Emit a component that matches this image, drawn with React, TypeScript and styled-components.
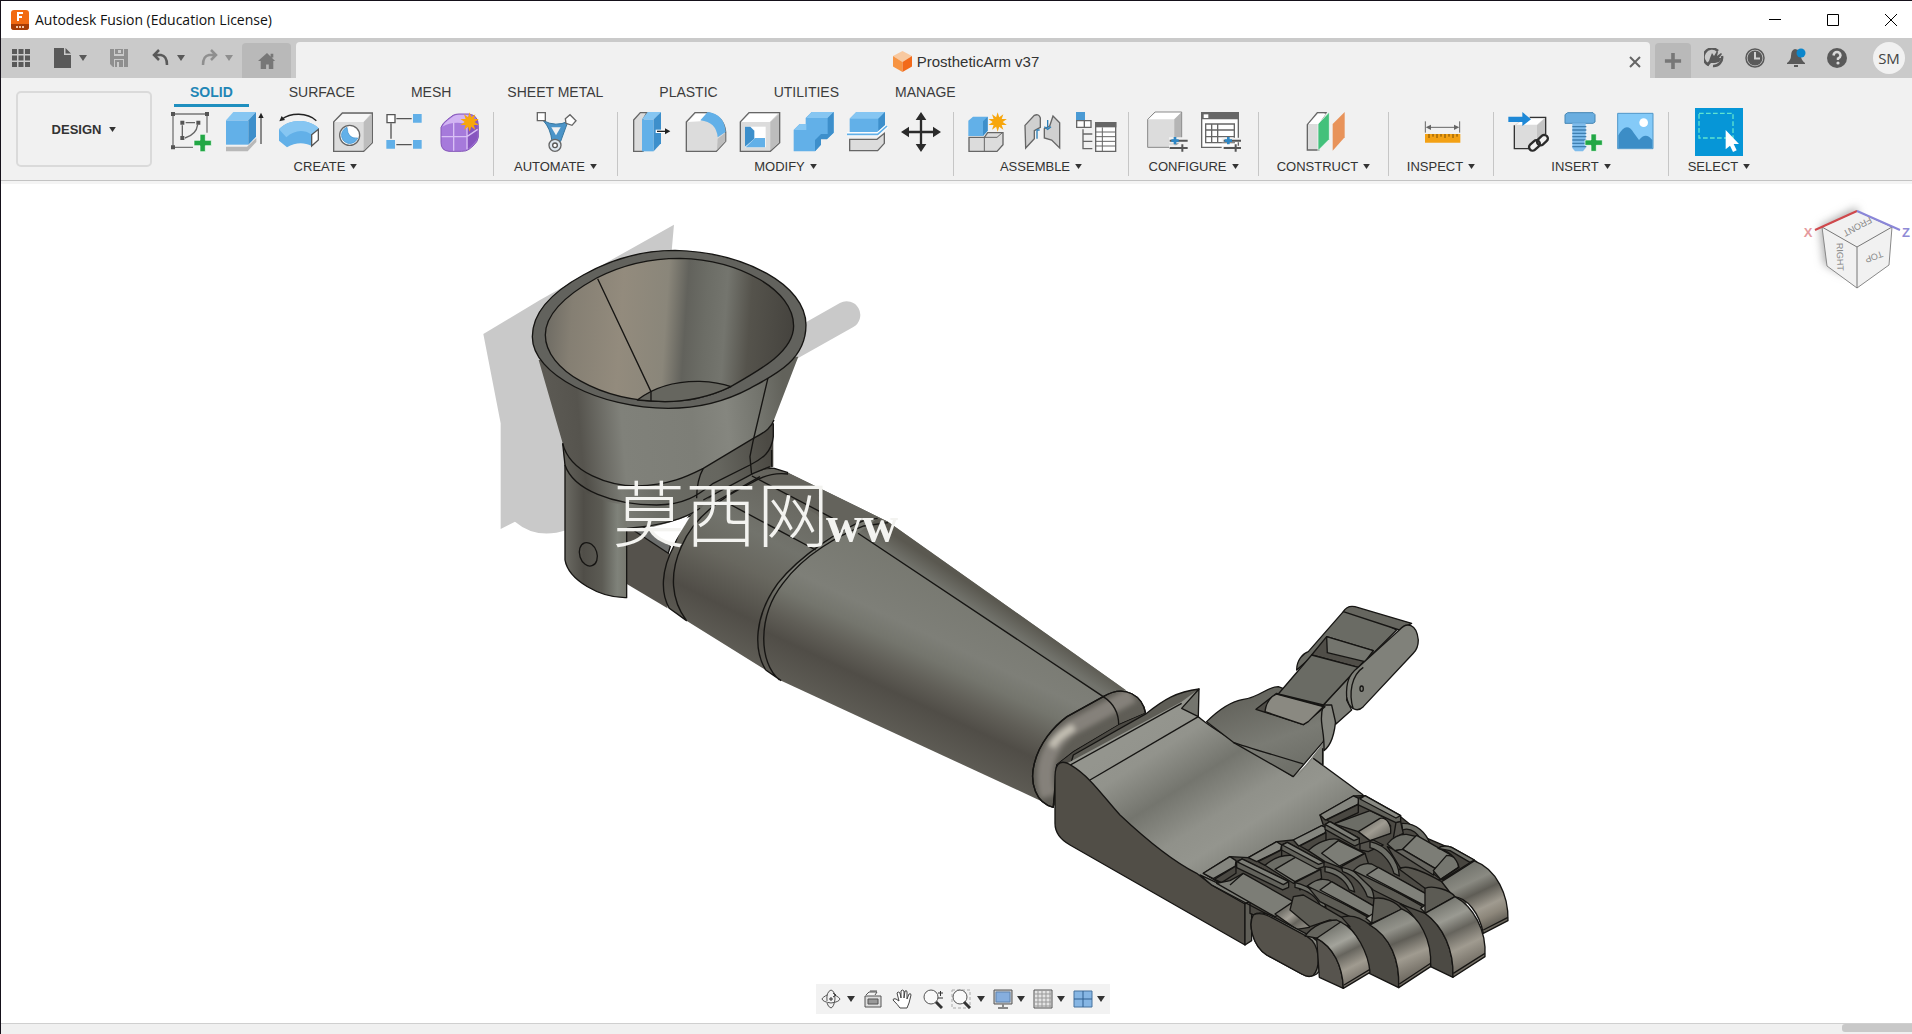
import React from "react";
import styled, { createGlobalStyle } from "styled-components";

const Global = createGlobalStyle`
  * { box-sizing: border-box; }
  body { margin: 0; background: #fff; font-family: "Liberation Sans", Arial, sans-serif; color: #333; }
  button { font: inherit; color: inherit; background: none; border: 0; padding: 0; margin: 0; cursor: pointer; }
  svg { display: block; }
`;

const Frame = styled.div`
  min-height: 100vh;
  display: flex;
  flex-direction: column;
  border-top: 1px solid #15111a;
  border-left: 1px solid #15111a;
`;

/* ---------- title bar ---------- */
const TitleBar = styled.header`
  display: flex;
  align-items: center;
  height: 37px;
  padding-left: 10px;
  gap: 6px;
  background: #fff;
`;
const Title = styled.h1`
  flex: 1;
  margin: 0;
  font: 400 14px/20px "Open Sans", "Noto Sans", sans-serif;
  color: #111;
`;
const WindowButtons = styled.div`
  display: flex;
`;
const WindowButton = styled.button`
  display: grid;
  place-items: center;
  width: 58px;
  height: 36px;
  &:last-child { width: 50px; padding-left: 8px; }
`;

/* ---------- document tab bar ---------- */
const TabBar = styled.div`
  display: flex;
  align-items: flex-end;
  height: 40px;
  background: #cacaca;
`;
const QuickTools = styled.div`
  display: flex;
  align-items: center;
  align-self: stretch;
  width: 241px;
  padding-left: 10px;
`;
const QuickButton = styled.button<{ $w: number; $dim?: boolean }>`
  display: flex;
  align-items: center;
  gap: 6px;
  width: ${(p) => p.$w}px;
  color: ${(p) => (p.$dim ? "#8f8f8f" : "#595959")};
`;
const SideTab = styled.button<{ $w: number }>`
  display: grid;
  place-items: center;
  width: ${(p) => p.$w}px;
  height: 35px;
  border-radius: 4px 4px 0 0;
  background: #b9b9b9;
  color: #777;
`;
const DocumentTab = styled.div`
  flex: 1;
  display: flex;
  align-items: center;
  height: 36px;
  margin: 0 5px;
  padding: 3px 6px 0 0;
  border-radius: 4px 4px 0 0;
  background: #f1f1f1;
`;
const DocumentName = styled.div`
  flex: 1;
  display: flex;
  align-items: center;
  justify-content: center;
  gap: 5px;
  padding-left: 8px;
  font-size: 15px;
  line-height: 20px;
`;
const CloseTab = styled.button`
  width: 16px;
  height: 16px;
  color: #666;
`;
const AccountTools = styled.div`
  display: flex;
  align-items: center;
  align-self: stretch;
  gap: 21px;
  padding: 0 7px 0 13px;
  color: #595959;
`;
const Avatar = styled.button`
  width: 32px;
  height: 32px;
  margin-left: 5px;
  border-radius: 50%;
  background: #f1f1f1;
  color: #444;
  font: 400 15px/32px "Open Sans", sans-serif;
`;

/* ---------- ribbon ---------- */
const Ribbon = styled.nav`
  display: flex;
  gap: 6px;
  height: 106px;
  padding-left: 15px;
  background: linear-gradient(#f1f1f1 102px, #c3c3c3 102px, #c3c3c3 103px, #f4f4f4 103px);
`;
const Workspace = styled.button`
  display: flex;
  align-items: center;
  justify-content: center;
  gap: 8px;
  width: 136px;
  height: 76px;
  margin-top: 13px;
  border: 2px solid #dadada;
  border-radius: 5px;
  font-size: 13px;
  font-weight: 700;
`;
const RibbonBody = styled.div`
  flex: 1;
`;
const RibbonTabs = styled.div`
  display: flex;
  gap: 24px;
  padding-left: 16px;
`;
const RibbonTab = styled.button<{ $on?: boolean }>`
  height: 29px;
  padding: 1px 16px 0;
  border-bottom: 3px solid ${(p) => (p.$on ? "#1f8fbf" : "transparent")};
  color: ${(p) => (p.$on ? "#1f86b6" : "#3c3c3c")};
  font-size: 14px;
  font-weight: ${(p) => (p.$on ? 700 : 400)};
  white-space: nowrap;
`;
const Groups = styled.div`
  display: flex;
  padding-top: 5px;
`;
const Group = styled.section<{ $w: number }>`
  display: flex;
  flex-direction: column;
  align-items: center;
  gap: 6px;
  width: ${(p) => p.$w}px;
  height: 64px;
  border-right: 1px solid #c6c6c6;
  &:last-child { border-right: 0; }
`;
const Tools = styled.div`
  display: flex;
  gap: 14px;
`;
const Tool = styled.button<{ $on?: boolean }>`
  width: 40px;
  height: 40px;
  background: ${(p) => (p.$on ? "#0696d7" : "none")};
  box-shadow: ${(p) => (p.$on ? "0 0 0 4px #0696d7" : "none")};
`;
const GroupMenu = styled.button`
  display: flex;
  align-items: center;
  gap: 5px;
  height: 17px;
  font-size: 13px;
  line-height: 16px;
  color: #333;
`;

/* ---------- viewport ---------- */
const Viewport = styled.main`
  position: relative;
  flex: 1;
  display: flex;
  background: #fff;
`;
const Scene = styled.svg`
  flex: 1;
  min-width: 0;
  width: 100%;
`;
const ViewCube = styled.svg`
  position: absolute;
  top: 14px;
  right: 0;
`;
const NavBar = styled.div`
  position: absolute;
  left: 12px;
  right: 0;
  bottom: 9px;
  display: flex;
  justify-content: center;
`;
const NavTools = styled.div`
  display: flex;
  align-items: center;
  gap: 8px;
  height: 30px;
  padding: 0 5px;
  background: #f2f2f2;
`;
const NavButton = styled.button<{ $gap?: number }>`
  display: flex;
  align-items: center;
  gap: ${(p) => p.$gap ?? 4}px;
  color: #333;
`;
const StatusBar = styled.footer`
  display: flex;
  justify-content: flex-end;
  height: 11px;
  border-top: 1px solid #cfcfcf;
  background: #f0f0f0;
`;
const ScrollThumb = styled.div`
  width: 70px;
  height: 8px;
  border-radius: 3px 0 0 3px;
  background: #c8c8c8;
`;

const Caret = ({ size = 8 }: { size?: number }) => (
  <svg width={size} height={size - 2} viewBox="0 0 8 6" aria-hidden="true">
    <path d="M0 0h8L4 6z" fill="currentColor" />
  </svg>
);

const Plus = ({ x, y }: { x: number; y: number }) => (
  <path d={`M${x - 8} ${y - 26}h16v18h18v16h-18v18h-16v-18h-18v-16h18z`} fill="#22a745" stroke="#fff" strokeWidth="2" />
);
const Star = ({ x, y }: { x: number; y: number }) => {
  const pts = Array.from({ length: 20 }, (_, i) => {
    const r = i % 2 ? 15 : 29;
    const a = (i * Math.PI) / 10 - Math.PI / 2;
    return `${x + r * Math.cos(a)},${y + r * Math.sin(a)}`;
  }).join(" ");
  return <polygon points={pts} fill="#f7a60c" />;
};

const BLUE = "#62b0e8";
const DEEP = "#3d8fcb";
const EDGE = "#666";
const PALE = "#dcdcdc";

const icons: Record<string, React.ReactNode> = {
  sketch: (
    <>
      <path d="M6 6H108V62M6 6V106H66" fill="none" stroke="#777" strokeWidth="4" />
      <path d="M34 40V72M44 32H72M80 38Q76 68 42 78" fill="none" stroke="#666" strokeWidth="4" />
      <path d="M0 0h12v12H0zM102 0h12v12h-12zM0 100h12v12H0zM28 26h12v12H28zM76 26h12v12H76zM28 72h12v12H28z" fill="#555" />
      <Plus x={95} y={93} />
    </>
  ),
  extrude: (
    <>
      <path d="M3 104H66L94 78V90L68 118H3z" fill="#b8b8b8" />
      <path d="M3 25H70V98H3z" fill={BLUE} />
      <path d="M3 25L25 0H93L70 25z" fill="#86c6f2" />
      <path d="M70 25L93 0V74L70 98z" fill={DEEP} />
      <path d="M108 96V14" stroke="#222" strokeWidth="3" />
      <path d="M100 18L108 2L116 18z" fill="#222" />
    </>
  ),
  revolve: (
    <>
      <path d="M8 22C34 2 84 0 112 26" fill="none" stroke="#222" strokeWidth="4" />
      <path d="M1 28L8 12L18 24z" fill="#222" />
      <path d="M0 52C28 20 90 18 120 50L98 102C74 90 48 92 24 106L0 86z" fill={BLUE} />
      <path d="M0 52C28 20 90 18 120 50L98 68C72 50 44 56 22 76z" fill="#86c6f2" />
      <path d="M98 68L118 52V84L98 102z" fill="#fff" stroke="#555" strokeWidth="4" />
    </>
  ),
  hole: (
    <>
      <path d="M2 30L28 3H118V92L92 118H2z" fill={PALE} stroke={EDGE} strokeWidth="4" />
      <path d="M5 30L30 6H112L92 30z" fill="#f6f6f6" />
      <path d="M92 30L116 6V92L92 116z" fill="#bdbdbd" />
      <circle cx="50" cy="70" r="30" fill="#fff" stroke={EDGE} strokeWidth="4" />
      <path d="M42 46A25 25 0 1 0 74 78Q44 82 42 46z" fill={BLUE} stroke={DEEP} strokeWidth="2" />
    </>
  ),
  pattern: (
    <>
      <path d="M28 20H74M12 34V80M28 98H74" stroke="#555" strokeWidth="4" />
      <path d="M0 8h24v24H0z" fill="#fff" stroke="#555" strokeWidth="4" />
      <path d="M78 6h26v26H78zM-2 84h26v26H-2zM78 84h26v26H78z" fill={BLUE} />
    </>
  ),
  form: (
    <>
      <path d="M0 46Q4 34 20 22L36 10Q44 6 54 6H84Q112 10 112 40V76Q110 90 96 102L84 112Q76 118 62 118H24Q0 116 0 92z" fill="#a67adb" stroke="#8456b8" strokeWidth="3" />
      <path d="M4 44Q8 34 22 24L38 12Q46 8 54 8H84L70 34Q30 28 4 44z" fill="#d2b4f3" />
      <path d="M78 38L110 24V76Q108 88 80 112z" fill="#8755bf" />
      <path d="M38 32V116M2 74H78L110 52M78 38V112" fill="none" stroke="#d9c0f5" strokeWidth="4" />
      <Star x={86} y={30} />
    </>
  ),
  automate: (
    <>
      <path d="M22 26Q60 46 96 28L74 88H48Q44 50 22 26z" fill="#4b94c8" stroke="#39779f" strokeWidth="3" />
      <path d="M46 46H74L60 70z" fill="#f1f1f1" />
      <path d="M4 2H28V26H4zM88 20L102 8L120 26L108 40L90 34z" fill="#fff" stroke={EDGE} strokeWidth="4" />
      <circle cx="57" cy="100" r="18" fill="#dce6ee" stroke={EDGE} strokeWidth="4" />
      <circle cx="57" cy="100" r="7" fill="#fff" stroke="#555" strokeWidth="4" />
    </>
  ),
  press: (
    <>
      <path d="M8 24L28 2H48L36 22V118H8z" fill={PALE} stroke={EDGE} strokeWidth="4" />
      <path d="M33 22H68V118H33z" fill={BLUE} />
      <path d="M33 22L50 0H90L68 22z" fill="#86c6f2" />
      <path d="M68 22L90 0V94L68 118z" fill={DEEP} />
      <path d="M74 58H104" stroke="#fff" strokeWidth="10" />
      <path d="M78 58H106" stroke="#222" strokeWidth="4" />
      <path d="M102 49L118 58L102 67z" fill="#222" />
    </>
  ),
  fillet: (
    <>
      <path d="M4 30L30 2H66Q118 12 122 60V88L94 118H4z" fill={PALE} stroke={EDGE} strokeWidth="4" />
      <path d="M8 30L32 5H66L46 28z" fill="#fff" />
      <path d="M46 25L68 0Q118 6 122 60L98 76Q94 30 46 25z" fill={BLUE} />
      <path d="M98 80L121 62V88L96 114z" fill="#bdbdbd" />
    </>
  ),
  shell: (
    <>
      <path d="M4 30L30 2H122V92L94 118H4z" fill={PALE} stroke={EDGE} strokeWidth="4" />
      <path d="M7 30L32 5H116L92 30z" fill="#fff" />
      <path d="M94 30L120 6V92L94 115z" fill="#bdbdbd" />
      <path d="M18 44H80V106H18z" fill="#fff" />
      <path d="M18 44H34L46 56V80L18 104z" fill={DEEP} />
      <path d="M20 106L48 78H78V106z" fill={BLUE} />
    </>
  ),
  combine: (
    <>
      <path d="M2 54L20 36H38V18L56 0H122V62L102 80H84V98L66 118H2z" fill={BLUE} />
      <path d="M40 18L56 0H122L104 18zM2 54L20 36H40V54z" fill="#86c6f2" />
      <path d="M104 18L122 0V62L102 82H84V98L66 118V84L84 66H104z" fill={DEEP} />
    </>
  ),
  split: (
    <>
      <path d="M8 82V116H92L112 94V64L90 82z" fill={PALE} stroke={EDGE} strokeWidth="4" />
      <path d="M8 20L28 0H114V42L94 60H8z" fill={BLUE} />
      <path d="M8 20L28 0H114L94 20z" fill="#86c6f2" />
      <path d="M94 20L114 0V42L94 60z" fill={DEEP} />
      <path d="M0 67H92L120 42" fill="none" stroke="#fff" strokeWidth="12" />
      <path d="M0 67H92L120 42" fill="none" stroke={BLUE} strokeWidth="5" />
    </>
  ),
  move: (
    <>
      <path d="M60 18V102M18 60H102" stroke="#2b2b2b" strokeWidth="7" />
      <path d="M60 0L76 24H44zM60 120L44 96H76zM0 60L24 44V76zM120 60L96 76V44z" fill="#2b2b2b" />
    </>
  ),
  component: (
    <>
      <path d="M6 76V118H90L108 98V62H62L52 76z" fill={PALE} stroke={EDGE} strokeWidth="4" />
      <path d="M52 76V118M54 76H90M90 76L106 62" fill="none" stroke={EDGE} strokeWidth="3" />
      <path d="M4 26L18 14H62V56L48 72H4z" fill={BLUE} />
      <path d="M48 28L62 14V56L48 72z" fill={DEEP} />
      <Star x={92} y={30} />
    </>
  ),
  joint: (
    <>
      <path d="M12 40L40 10Q54 4 58 18V46L40 56V80L14 108z" fill="#d0d0d0" stroke={EDGE} strokeWidth="4" />
      <path d="M96 12L116 32V108L92 84L70 78V50L86 42z" fill="#d0d0d0" stroke={EDGE} strokeWidth="4" />
      <path d="M48 80V54H56M80 24V48M70 44L80 52L90 44" fill="none" stroke="#2c7fb8" strokeWidth="4" />
    </>
  ),
  asbuilt: (
    <>
      <path d="M3 0H30V26H3z" fill="#4a9ad4" />
      <path d="M5 26H28V46H5zM28 26H48V46H28z" fill="#fff" stroke={EDGE} strokeWidth="4" />
      <path d="M24 52V110H52M24 66H52M24 88H52" fill="none" stroke={EDGE} strokeWidth="4" />
      <path d="M62 32H122V118H62z" fill="#fff" stroke={EDGE} strokeWidth="4" />
      <path d="M60 30H124V46H60z" fill="#666" />
      <path d="M62 60H122M62 74H122M62 88H122M62 102H122M82 46V118" stroke={EDGE} strokeWidth="3" />
    </>
  ),
  configure: (
    <>
      <path d="M2 22L24 0H104V84L80 106H2z" fill={PALE} stroke="#888" strokeWidth="3" />
      <path d="M4 22L25 2H102L82 22z" fill="#fff" />
      <path d="M82 22L102 2V84L82 104z" fill="#b5b5b5" />
      <path d="M66 84H124M66 108H124" stroke="#f1f1f1" strokeWidth="16" />
      <path d="M68 86H122M68 108H122M106 97V119" stroke="#555" strokeWidth="6" />
      <path d="M84 75V97M73 86H95" stroke="#2d86c4" strokeWidth="8" />
    </>
  ),
  cfgtable: (
    <>
      <path d="M2 2H112V106H2z" fill="#fff" stroke={EDGE} strokeWidth="4" />
      <path d="M0 0H114V22H0z" fill="#666" />
      <path d="M8 7H22V18H8z" fill="#fff" />
      <path d="M14 36H100V92H14zM14 54H100M14 74H100M32 36V92M50 36V92" fill="none" stroke="#666" strokeWidth="4" />
      <path d="M62 84H124M62 108H124" stroke="#f1f1f1" strokeWidth="14" />
      <path d="M68 86H120M68 108H120M104 97V119" stroke="#555" strokeWidth="6" />
      <path d="M82 75V97M71 86H93" stroke="#2d86c4" strokeWidth="8" />
    </>
  ),
  plane: (
    <>
      <path d="M10 38L40 2H66L44 38V114H10z" fill={PALE} stroke={EDGE} strokeWidth="4" />
      <path d="M14 36L42 5H66L44 36z" fill="#fff" />
      <path d="M42 36L76 0V82L42 116z" fill="#43c17b" stroke="#fff" strokeWidth="2" />
      <path d="M86 36L122 0V76L86 116z" fill="#e8935a" />
    </>
  ),
  measure: (
    <>
      <path d="M13 28V62M116 28V62M22 46H108" stroke="#666" strokeWidth="3" />
      <path d="M14 46L30 38V54zM115 46L99 54V38z" fill="#666" />
      <path d="M12 66H118V92H12z" fill="#f3a114" />
      <path d="M24 66v12M36 66v8M48 66v12M60 66v8M72 66v12M84 66v8M96 66v12M108 66v8" stroke="#7b4d00" strokeWidth="3" />
    </>
  ),
  derive: (
    <>
      <path d="M24 38L50 18H114L90 40V108H24z" fill={PALE} />
      <path d="M28 38L52 20H110L90 38z" fill="#fff" />
      <path d="M90 40L114 18V84L90 108z" fill="#c4c4c4" />
      <path d="M22 40V110H66M68 16H116V66" fill="none" stroke="#333" strokeWidth="4" />
      <path d="M4 14H46V0L72 22L46 42V30H4z" fill="#1e88d6" />
      <path d="M72 108L114 76" stroke="#f1f1f1" strokeWidth="20" />
      <g fill="none" strokeWidth="7" stroke="#2b2b2b">
        <rect x="64" y="90" width="36" height="21" rx="10" transform="rotate(-42 82 100)" />
        <rect x="88" y="74" width="36" height="21" rx="10" transform="rotate(-42 106 84)" />
      </g>
    </>
  ),
  bolt: (
    <>
      <path d="M12 8L20 2H96L102 8V30L96 34H12z" fill="#6aaee0" stroke="#4586b5" strokeWidth="3" />
      <path d="M34 34H74V108L66 118H42L34 108z" fill="#7ebcec" />
      <path d="M34 44H76M34 54H76M34 64H76M34 74H76M34 84H76M34 94H76M34 104H76" stroke="#3f7fb0" strokeWidth="4" />
      <Plus x={98} y={92} />
    </>
  ),
  image: (
    <>
      <path d="M8 4H114V110H8z" fill="#84caf8" stroke="#5197c8" strokeWidth="3" />
      <circle cx="86" cy="32" r="13" fill="#fff" />
      <path d="M10 70Q34 26 56 62L72 84Q92 58 112 84V108H10z" fill="#3c8dc6" />
    </>
  ),
  select: (
    <>
      <path d="M0 4H102V78H0z" fill="none" stroke="#5fe3d0" strokeWidth="4" strokeDasharray="14 7" />
      <path d="M80 54V112L93 101L102 120L113 115L104 96H120z" fill="#fff" />
    </>
  ),
};

const groups: { name: string; w: number; tools: string[] }[] = [
  { name: "CREATE", w: 336, tools: ["sketch", "extrude", "revolve", "hole", "pattern", "form"] },
  { name: "AUTOMATE", w: 124, tools: ["automate"] },
  { name: "MODIFY", w: 336, tools: ["press", "fillet", "shell", "combine", "split", "move"] },
  { name: "ASSEMBLE", w: 175, tools: ["component", "joint", "asbuilt"] },
  { name: "CONFIGURE", w: 130, tools: ["configure", "cfgtable"] },
  { name: "CONSTRUCT", w: 130, tools: ["plane"] },
  { name: "INSPECT", w: 105, tools: ["measure"] },
  { name: "INSERT", w: 175, tools: ["derive", "bolt", "image"] },
  { name: "SELECT", w: 100, tools: ["select"] },
];

const ribbonTabs = ["SOLID", "SURFACE", "MESH", "SHEET METAL", "PLASTIC", "UTILITIES", "MANAGE"];

/* ---------- prosthetic arm ---------- */
type Stop = [number, string];
const Grad = ({ id, c, stops }: { id: string; c: [number, number, number, number]; stops: Stop[] }) => (
  <linearGradient id={id} gradientUnits="userSpaceOnUse" x1={c[0]} y1={c[1]} x2={c[2]} y2={c[3]}>
    {stops.map(([o, color]) => (
      <stop key={o} offset={o} stopColor={color} />
    ))}
  </linearGradient>
);

type Part = [string, string];
const Parts = ({ list }: { list: Part[] }) => (
  <>
    {list.map(([fill, d], i) => (
      <path key={i} d={d} fill={fill} />
    ))}
  </>
);

const WRIST = "M1200 1072C1150 1060 1130 1000 1145 940C1160 880 1200 830 1240 800L1345 740C1410 700 1460 740 1468 790L1390 825L1260 905L1210 945Z";

const knuckles: Part[] = [
  ["#4c4a44", "M520 850L600 800L655 803L740 755L790 750L880 705L870 675L970 618L1000 617L1112 680L1192 745L1250 770L1340 815L1300 960L1100 1000L840 1050L660 970L660 935Z"],
  ["#85867f", "M870 675L970 618L988 626L985 642L886 690Z"],
  ["#85867f", "M790 750L875 707L888 713L886 728L806 768Z"],
  ["#85867f", "M655 803L740 755L755 765L752 780L680 815Z"],
  ["#85867f", "M520 850L600 800L618 812L616 828L550 866Z"],
  ["#4a4842", "M890 690L985 643V668L912 702Z"],
  ["#4a4842", "M810 768L888 728V752L835 782Z"],
  ["#4a4842", "M684 815L755 780V800L705 826Z"],
  ["#4a4842", "M554 868L618 828V850L575 878Z"],
  ["#6c6d66", "M912 702L1020 662L1062 682L1082 708L1080 730L1020 750L985 725Z"],
  ["url(#roller)", "M985 725L1050 685C1070 680 1085 705 1082 730L1020 752Z"],
  ["#6c6d66", "M835 782C860 758 900 742 925 748L1005 790L930 832L885 815Z"],
  ["#7c7d76", "M875 790L925 752L1003 790L928 828Z"],
  ["#6c6d66", "M705 826C735 800 770 792 800 798L872 838L790 880Z"],
  ["#7c7d76", "M735 838L800 800L870 838L795 875Z"],
  ["#55534d", "M930 832L1005 790L1015 820L960 850Z"],
  ["#55534d", "M795 878L872 838L875 865L810 900Z"],
  ["#62625b", "M985 625L1005 617L1112 677V695L1098 698L985 645Z"],
  ["#898a83", "M1005 617L1112 677L1098 684L990 627Z"],
  ["#62625b", "M885 705L900 695L988 745V762L975 768L885 718Z"],
  ["#7c7d76", "M900 695L988 745L972 752L885 703Z"],
  ["#62625b", "M755 765L772 757L882 817V830L862 837L755 780Z"],
  ["#7c7d76", "M772 757L882 817L866 823L757 765Z"],
  ["#62625b", "M620 815L636 807L776 875V892L758 900L620 833Z"],
  ["#7c7d76", "M636 807L776 875L760 884L622 816Z"],
  ["#55534d", "M1098 698L1112 695L1120 730L1090 745Z"],
  ["#55534d", "M990 762V780L1015 785L1060 765L1030 750Z"],
];

const fingers: Part[] = [
  /* fins between the fingers */
  ["#6d6e67", "M395 130C440 128 470 160 480 192L462 200C450 160 420 140 398 150Z"],
  ["#6d6e67", "M300 185C350 195 385 240 388 288L372 280C360 240 330 210 300 203Z"],
  ["#6d6e67", "M215 262C270 272 310 315 312 355L292 350C280 315 250 285 218 275Z"],
  ["#6d6e67", "M165 260C210 265 248 300 254 336L238 330C225 300 200 282 165 275Z"],
  ["#6d6e67", "M75 308C120 318 160 350 168 382L152 378C140 350 110 330 75 322Z"],
  /* index finger */
  ["#55534d", "M352 200L375 210L495 285L512 298L480 300L390 262Z"],
  ["#6c6d66", "M352 192C365 172 390 162 410 163L440 170L398 208L375 212Z"],
  ["#7c7d76", "M398 208L440 166L545 226L495 265Z"],
  ["#66655f", "M375 212L398 208L495 265L490 285Z"],
  ["url(#tipA)", "M490 272L530 226C555 226 568 245 565 262L512 298Z"],
  ["#484640", "M505 205C515 195 535 198 545 202L613 240L520 298L512 298L567 262C560 230 530 210 505 205Z"],
  ["#73746d", "M505 205C515 195 535 198 545 202L613 240L600 247L540 212Z"],
  ["#57554e", "M388 268C400 255 440 262 515 305L550 350L465 325Z"],
  ["url(#tipA)", "M515 305L613 243C680 268 716 345 714 422L640 460C628 400 592 352 550 350Z"],
  /* middle finger */
  ["#5c5b54", "M250 272L300 290L455 378L465 398L440 395L310 330Z"],
  ["#70716a", "M250 272C265 255 285 248 305 252L505 362L470 380Z"],
  ["#80817a", "M290 285L325 262L505 362L470 380Z"],
  ["#9a9a92", "M452 385L492 356L510 368L505 380L465 398Z"],
  ["#4c4a44", "M390 372L465 400C520 440 552 510 549 592L482 560C480 480 440 400 390 372Z"],
  ["#5c5b54", "M465 325C490 315 540 330 555 350L465 400Z"],
  ["url(#tipB)", "M465 400L555 350C610 380 650 450 645 530L549 592C552 510 520 440 465 400Z"],
  /* ring finger */
  ["#5c5b54", "M115 322L150 330L300 415L305 432L270 425L150 365Z"],
  ["#70716a", "M112 318C135 300 150 295 175 300L340 395L305 412Z"],
  ["#7c7d76", "M150 330L185 305L340 395L305 412Z"],
  ["#9a9a92", "M288 415L325 390L345 402L340 410L305 430Z"],
  ["#5c5b54", "M312 355C340 350 380 365 395 388L305 430Z"],
  ["#4c4a44", "M205 415C240 400 270 410 300 435C360 470 390 540 386 623L298 580C285 500 250 440 205 415Z"],
  ["url(#tipC)", "M300 435L395 387C450 410 486 480 482 560L386 623C390 540 360 470 300 435Z"],
  /* little finger */
  ["#5c5b54", "M70 350L100 345L215 412L240 440L180 420L120 440L60 390Z"],
  ["#65655e", "M105 468C130 435 170 420 200 420L215 428L145 475Z"],
  ["#57544e", "M140 475C190 500 218 560 220 625L148 592Z"],
  ["url(#tipD)", "M140 475L212 426C260 450 295 520 300 577L220 625C218 560 190 500 140 475Z"],
];

const ArmModel = () => (
  <Scene viewBox="1 184 1911 839" role="img" aria-label="Prosthetic arm model">
    <defs>
      <Grad id="inner" c={[230, 330, 970, 380]} stops={[[0, "#6f6c64"], [0.1, "#857f73"], [0.3, "#938b7d"], [0.48, "#8a867a"], [0.56, "#62625c"], [0.64, "#6c6d66"], [0.72, "#74756e"], [0.82, "#55534c"], [1, "#45433e"]]} />
      <Grad id="cone" c={[240, 600, 940, 540]} stops={[[0, "#5b5953"], [0.12, "#56544e"], [0.3, "#80817a"], [0.6, "#7d7e77"], [0.75, "#85867f"], [0.9, "#72736c"], [1, "#62625b"]]} />
      <Grad id="cuff" c={[285, 900, 910, 800]} stops={[[0, "#66655e"], [0.12, "#504e48"], [0.28, "#7a7b74"], [0.45, "#6b6c65"], [0.75, "#66665f"], [1, "#4c4a44"]]} />
      <Grad id="post" c={[285, 1000, 470, 1000]} stops={[[0, "#6b6a63"], [0.3, "#504e48"], [0.6, "#5c5b54"], [0.85, "#7f827a"], [1, "#77786f"]]} />
      <Grad id="forearm" c={[780, 294, 552, 764]} stops={[[0, "#76776f"], [0.4, "#7e7f78"], [0.52, "#74756d"], [0.66, "#605e57"], [0.78, "#504d47"], [1, "#5e5c55"]]} />
      <Grad id="upper" c={[430, 90, 190, 560]} stops={[[0, "#66655e"], [0.35, "#72736c"], [0.55, "#68675f"], [0.8, "#504d47"], [1, "#5e5c55"]]} />
      <Grad id="strip" c={[1060, 470, 1030, 515]} stops={[[0, "#5a5850"], [1, "#72736c"]]} />
      <Grad id="palm" c={[330, 430, 600, 860]} stops={[[0, "#94958e"], [0.15, "#92938c"], [0.4, "#74756e"], [0.65, "#90918a"], [0.8, "#94958e"], [1, "#80817a"]]} />
      <Grad id="roller" c={[1000, 690, 1050, 760]} stops={[[0, "#6b6a63"], [0.5, "#a09c92"], [1, "#66645d"]]} />
      <Grad id="rollerLow" c={[765, 950, 815, 1015]} stops={[[0, "#6b6a63"], [0.4, "#a39f96"], [0.7, "#66645d"], [1, "#87847c"]]} />
      <Grad id="thumbBase" c={[680, 320, 760, 540]} stops={[[0, "#66665f"], [0.6, "#7a7b74"], [1, "#6f7069"]]} />
      <Grad id="tipA" c={[570, 270, 650, 440]} stops={[[0, "#75766f"], [0.25, "#8a8a82"], [0.45, "#5f5d56"], [0.7, "#a09b90"], [0.85, "#8d877b"], [1, "#6a665d"]]} />
      <Grad id="tipB" c={[510, 370, 600, 560]} stops={[[0, "#75766f"], [0.25, "#9a9a92"], [0.45, "#66645d"], [0.7, "#a09b90"], [1, "#6f6a61"]]} />
      <Grad id="tipC" c={[350, 400, 430, 590]} stops={[[0, "#75766f"], [0.25, "#92928a"], [0.45, "#605e57"], [0.7, "#a09b90"], [1, "#6f6a61"]]} />
      <Grad id="tipD" c={[175, 445, 255, 605]} stops={[[0, "#75766f"], [0.3, "#a3a39b"], [0.5, "#66645d"], [0.75, "#a09b90"], [1, "#77726a"]]} />
      <clipPath id="wristClip"><path d={WRIST} /></clipPath>
      <filter id="sheen" x="-30%" y="-30%" width="160%" height="160%"><feGaussianBlur stdDeviation="8" /></filter>
    </defs>

    {/* ground shadow */}
    <g transform="translate(470 210) scale(0.3333)" fill="#c9c9c9">
      <path d="M40 372L210 270L612 44L600 180L480 620L290 960Q200 990 135 935L92 957V640Z" />
      <path d="M930 428L1130 315" stroke="#c9c9c9" strokeWidth="82" strokeLinecap="round" />
    </g>

    {/* forearm */}
    <g transform="translate(640 450) scale(0.3444 0.3333)" stroke="#161513" strokeWidth="4" strokeLinejoin="round" fill="none">
      <path d="M-42 225L85 310L80 475L-42 400Z" fill="#55524c" stroke="none" />
      <path d="M-42 225L0 225L90 282L82 310Z" fill="#6b6d6c" />
      <path d="M270 85C310 65 350 50 390 55L430 68L720 215L490 310L365 660L135 512L85 475C60 430 60 360 100 285C130 190 190 120 270 85Z" fill="url(#upper)" stroke="none" />
      <path d="M325 78L430 68L720 215L640 215L590 240Z" fill="#64635c" stroke="none" />
      <path d="M720 215L1410 720L1468 785L1200 1070L410 692L365 660C330 600 340 500 400 405C470 310 590 215 690 205Z" fill="url(#forearm)" stroke="none" />
      <path d="M690 205L720 215L1410 720L1345 742L633 250Z" fill="url(#strip)" stroke="none" />
      <path d="M85 475C60 430 60 360 100 285C130 190 190 140 270 100C320 70 350 52 390 55L430 68M85 475L135 512C90 450 85 370 120 290C160 190 260 130 325 98C360 75 400 68 430 72" />
      <path d="M365 660C330 600 330 500 400 400C470 310 590 235 650 212L690 205M410 692L365 660M405 690C345 640 340 500 415 400C480 310 580 255 650 228L720 218" />
      <path d="M325 78L560 205M633 250L1345 740M265 165L510 300" />
      <path d={WRIST} fill="#5f5d56" />
      <g clipPath="url(#wristClip)">
        <g filter="url(#sheen)">
          <path d="M1185 1040C1160 950 1190 880 1250 835L1430 735" stroke="#85817a" strokeWidth="46" />
          <path d="M1195 890Q1215 855 1260 832" stroke="#c4c0b4" strokeWidth="22" />
        </g>
      </g>
      <path d={WRIST} />
      <path d="M1345 740C1375 760 1390 785 1390 825" />
      <path d="M1210 945L1260 905L1390 825L1468 790L1480 810L1240 965Z" fill="#4c4a44" stroke="none" />
    </g>

    {/* socket */}
    <g transform="translate(470 210) scale(0.3333)" stroke="#161513" strokeWidth="4" strokeLinejoin="round" fill="none">
      <path d="M278 700L287 800V900H468V955L550 950Q640 930 690 900L720 860L850 790L910 770V640L600 600Z" fill="url(#cuff)" stroke="none" />
      <path d="M470 955Q620 945 690 895" />
      <path d="M285 765C310 840 390 880 470 883V1163C390 1165 295 1110 285 1050Z" fill="url(#post)" stroke="none" />
      <path d="M285 765V1050C295 1110 390 1165 470 1163V955" />
      <path d="M548 968L660 920L605 1010Z" fill="#fff" stroke="none" />
      <path d="M206 450L278 700C300 790 420 828 500 828C600 825 650 800 700 775L850 685C890 665 905 650 912 630L985 440Z" fill="url(#cone)" stroke="none" />
      <path d="M278 700C300 790 420 828 500 828C600 825 650 800 700 775L850 685C890 665 905 650 912 630" />
      <path d="M278 700L285 765C310 840 430 885 560 885C650 885 690 850 730 820L840 765C880 745 905 725 910 680V640M895 500L850 690L840 740L845 795M700 775Q680 810 680 865M905 720V770M700 870L850 790L900 770M720 885L870 800" />
      <path d="M187 380C187 285 285 225 340 195C420 150 510 121 615 121C825 127 1008 225 1008 345C1008 450 915 495 840 535C765 575 690 595 595 595C390 595 187 494 187 380Z" fill="#62625d" />
      <path d="M226 375C226 300 315 240 380 204C450 168 540 145 630 145C810 150 971 240 971 348C971 425 870 480 780 531C720 560 660 575 585 575C390 573 226 480 226 375Z" fill="url(#inner)" />
      <path d="M502 570C560 525 630 513 690 514Q745 516 783 530C720 560 660 575 585 575Q540 574 502 570Z" fill="#66665f" />
      <path d="M383 206L543 545V573" />
      <ellipse cx="355" cy="1033" rx="26" ry="36" transform="rotate(-18 355 1033)" />
    </g>

    {/* palm and thumb */}
    <g transform="translate(1030 590) scale(0.3333)" stroke="#161513" strokeWidth="4" strokeLinejoin="round" fill="none">
      <path d="M130 495L350 370C400 330 440 305 507 297L455 355L120 530Z" fill="#5e5d56" />
      <path d="M112 520L455 335L507 297V380C560 430 700 500 790 560L850 505L1000 615L985 700L860 790L560 890L300 740L112 560Z" fill="url(#palm)" stroke="none" />
      <path d="M112 530L455 340M505 380C560 430 700 500 790 560M850 505L1000 615" />
      <path d="M507 297L455 355L505 380Z" fill="#74756e" />
      <path d="M180 570L505 380" />
      <path d="M75 560C75 510 100 510 125 527C180 560 220 620 270 675C350 750 430 815 500 850L545 885L645 940V1065L120 765Q75 740 75 700Z" fill="#514e47" />
      <path d="M510 855L545 885L645 942L665 932L560 878Z" fill="#7c7d76" />
      <path d="M645 942L665 932V1052L645 1065Z" fill="#5f5e57" />
      <path d="M800 560L882 455V527L850 505Z" fill="#7c7d76" stroke="none" />
      <path d="M878 475V525L850 505" />
      <path d="M530 395C560 365 600 335 640 328C690 322 710 290 745 290L885 345C870 400 890 420 880 455L820 525L790 560L610 457Z" fill="url(#thumbBase)" />
      <path d="M610 457Q640 468 820 522" />
      <path d="M880 345C900 330 920 345 918 380C915 430 905 465 882 482C885 420 865 400 880 345Z" fill="#85867f" />
      <path d="M985 232L960 260L950 330L965 360L918 402L905 345L880 345Z" fill="#7c7d76" />
      <path d="M678 358L740 310L885 350L820 404Z" fill="#4f4d47" />
      <path d="M705 365Q710 325 740 312L880 350L835 395L820 404Z" fill="#8a8981" />
      <path d="M800 240C800 210 820 190 835 185L940 65L960 50L1100 120L985 235L845 200Z" fill="#6a6b64" />
      <path d="M890 140L1030 182L985 232L845 195Z" fill="#504e48" />
      <path d="M890 140L892 188L1005 215L1030 182Z" fill="#74756e" />
      <path d="M845 195L985 232L880 345L745 312Z" fill="#6a6b64" />
      <path d="M940 65C950 48 965 48 975 50L1145 100L1108 120Z" fill="#66665f" />
      <path d="M1108 120C1130 95 1160 100 1165 150C1165 170 1160 180 1150 190L1000 350C980 370 955 355 950 320C948 280 955 255 985 232Z" fill="#80817a" />
      <path d="M1000 232C965 255 955 310 970 358" />
      <ellipse cx="995" cy="296" rx="5" ry="8" />
      <Parts list={knuckles} />
      <path d="M560 880L600 872L640 850L790 935L745 975L735 980Z" fill="#7c7d76" />
      <path d="M600 885L640 850M545 885L735 985" />
      <path d="M735 972L790 935C825 945 845 985 838 1012L800 1018Z" fill="url(#rollerLow)" />
      <path d="M670 975C690 960 720 975 740 985L845 1040C885 1065 885 1130 860 1152C845 1163 830 1160 815 1152L710 1095C665 1065 655 1000 670 975Z" fill="#85867f" />
      <path d="M670 975C690 965 710 975 730 985L832 1040C872 1065 872 1130 850 1156C840 1162 828 1160 815 1152L710 1095C665 1065 655 1000 670 975Z" fill="#55524b" />
    </g>
    <g transform="translate(1270 780) scale(0.3333)" stroke="#161513" strokeWidth="4" strokeLinejoin="round">
      <path d="M380 240L560 290L600 400L560 450L480 420L400 500L300 450L230 440L215 400Z" fill="#4c4a44" stroke="none" />
      <Parts list={fingers} />
      <path d="M640 450L714 412M550 580L645 520M388 612L482 550M222 615L300 568" />
    </g>

    {/* watermark */}
    <g fill="#f3f3f0">
      <text x="613" y="541" fontSize="72" fontFamily='"Noto Sans CJK SC", sans-serif' fontWeight="300">莫西网</text>
      <text x="826" y="541" fontSize="50" fontFamily='"Liberation Serif", serif' fontWeight="700">ww</text>
    </g>
  </Scene>
);

const Cube = () => (
  <ViewCube width="112" height="100" viewBox="1800 198 112 100" role="img" aria-label="View cube">
    <defs>
      <filter id="soft" x="-30%" y="-30%" width="160%" height="160%"><feGaussianBlur stdDeviation="4" /></filter>
    </defs>
    <path d="M1857 207L1820 226L1824 264L1845 275L1860 240Z" fill="#aaa" filter="url(#soft)" />
    <path d="M1857 211L1892 227L1889 265L1857 288L1827 266L1822 227Z" fill="#f1f1f1" stroke="#888" />
    <path d="M1822 227L1857 247L1892 227M1857 247V288" fill="none" stroke="#777" />
    <path d="M1857 211L1815 230" stroke="#d0484c" strokeWidth="2" />
    <path d="M1857 211L1900 230" stroke="#8a86d8" strokeWidth="2" />
    <g fontFamily='"Liberation Sans", sans-serif' textAnchor="middle" fill="#888">
      <text x="1808" y="237" fontSize="13" fontWeight="700" fill="#e59a9e">X</text>
      <text x="1906" y="237" fontSize="13" fontWeight="700" fill="#8f8bd6">Z</text>
      <g fontSize="9">
        <text transform="translate(1856 224) rotate(152)">FRONT</text>
        <text transform="translate(1837 257) rotate(88)">RIGHT</text>
        <text transform="translate(1873 254) rotate(160)">TOP</text>
      </g>
    </g>
  </ViewCube>
);

const NavIcon = ({ children }: { children: React.ReactNode }) => (
  <svg width="20" height="20" viewBox="0 0 20 20" fill="none" stroke="#555" aria-hidden="true">{children}</svg>
);

const Small = ({ children, size = 20 }: { children: React.ReactNode; size?: number }) => (
  <svg width={size} height={size} viewBox="0 0 20 20" fill="currentColor" aria-hidden="true">{children}</svg>
);

export default function App() {
  return (
    <>
      <Global />
      <Frame>
        <TitleBar>
          <svg width="18" height="20" viewBox="0 0 18 20" aria-hidden="true">
            <rect width="18" height="20" rx="3" fill="#f26a11" />
            <path d="M0 14h18v3q0 3-3 3H3q-3 0-3-3z" fill="#a63c04" />
            <path d="M7 11V3h5M7 7h4" stroke="#fff" strokeWidth="2" fill="none" />
            <path d="M5 17h8" stroke="#f4c8a8" strokeWidth="2" strokeDasharray="2 1" />
          </svg>
          <Title>Autodesk Fusion (Education License)</Title>
          <WindowButtons>
            <WindowButton aria-label="Minimize"><svg width="12" height="12"><path d="M0 5.500h12" stroke="#000" /></svg></WindowButton>
            <WindowButton aria-label="Maximize"><svg width="12" height="12"><path d="M.5.5h11v11H.5z" stroke="#000" fill="none" /></svg></WindowButton>
            <WindowButton aria-label="Close"><svg width="12" height="12"><path d="M0 0l12 12M12 0L0 12" stroke="#000" /></svg></WindowButton>
          </WindowButtons>
        </TitleBar>

        <TabBar>
          <QuickTools>
            <QuickButton $w={42} aria-label="Data panel">
              <Small><path d="M1 1h5v5H1zM7.500 1h5v5h-5zM14 1h5v5h-5zM1 7.500h5v5H1zM7.500 7.500h5v5h-5zM14 7.500h5v5h-5zM1 14h5v5H1zM7.500 14h5v5h-5zM14 14h5v5h-5z" /></Small>
            </QuickButton>
            <QuickButton $w={56} aria-label="File">
              <Small><path d="M1 0h10v7h7v13H1zM12.500 0L18 5.500h-5.500z" /></Small>
              <Caret />
            </QuickButton>
            <QuickButton $w={42} $dim aria-label="Save">
              <Small><path fillRule="evenodd" d="M1 1h18v18H4l-3-3zM5 1v7h10V1h-1v5H6V1zM5 19v-8h10v8h-1v-7H6v7zM9 2h3v3H9zM8 14h2v5H8z" /></Small>
            </QuickButton>
            <QuickButton $w={48} aria-label="Undo">
              <Small><path d="M8 2L3 7l5 5M3.500 7H10q6 1 6 10" fill="none" stroke="currentColor" strokeWidth="2.500" /></Small>
              <Caret />
            </QuickButton>
            <QuickButton $w={42} $dim aria-label="Redo">
              <Small><path d="M12 2l5 5-5 5M16.500 7H10Q4 8 4 17" fill="none" stroke="currentColor" strokeWidth="2.500" /></Small>
              <Caret />
            </QuickButton>
          </QuickTools>
          <SideTab $w={49} aria-label="Home">
            <Small size={18}><path d="M10 1l9 9h-2v9h-5v-5H9v5H3v-9H0zM14 2h3v4h-3z" /></Small>
          </SideTab>
          <DocumentTab>
            <DocumentName>
              <svg width="19" height="21" viewBox="0 0 19 21" aria-hidden="true">
                <path d="M9.500 0L19 5l-9.500 6L0 5z" fill="#f8c9a0" />
                <path d="M0 5l9.500 6v10L0 15.500z" fill="#f79443" />
                <path d="M19 5l-9.500 6v10l9.500-5.500z" fill="#f26a1b" />
              </svg>
              ProstheticArm v37
            </DocumentName>
            <CloseTab aria-label="Close tab"><svg width="14" height="14"><path d="M2 2l10 10M12 2L2 12" stroke="currentColor" strokeWidth="2" /></svg></CloseTab>
          </DocumentTab>
          <SideTab $w={36} aria-label="New tab">
            <Small size={18}><path d="M8 1h4v7h7v4h-7v7H8v-7H1V8h7z" /></Small>
          </SideTab>
          <AccountTools>
            <button aria-label="Extensions"><Small><path d="M5 17A8.500 8.500 0 1 1 14 3M18 8A8.500 8.500 0 0 1 9 18" stroke="currentColor" strokeWidth="2.500" fill="none" /><path d="M6 10l2-5 2 3 3-5 1 1-1 4 4-3 1 1-3 4 3 0-3 4-4 1-4 0-3 3-2-2 3-3z" /></Small></button>
            <button aria-label="Job status"><Small><circle cx="10" cy="10" r="9" fill="none" stroke="currentColor" strokeWidth="1.500" /><circle cx="10" cy="10" r="7.500" /><path d="M10 4v6.500h5" stroke="#d0d0d0" strokeWidth="2" fill="none" /></Small></button>
            <button aria-label="Notifications"><Small><path d="M9 1Q5 2 5 8q0 4-4 7v1h18v-1q-4-3-4-7 0-6-6-7zM8 17h4v2H8z" /><circle cx="15" cy="5" r="4.500" fill="#0a86cc" /></Small></button>
            <button aria-label="Help"><Small><circle cx="10" cy="10" r="10" /><path d="M6.500 7.500Q7 4 10 4t3.500 3.500Q13.500 9 11 10.500V12" stroke="#d8d8d8" strokeWidth="2.500" fill="none" /><circle cx="11" cy="15" r="1.600" fill="#d8d8d8" /></Small></button>
            <Avatar>SM</Avatar>
          </AccountTools>
        </TabBar>

        <Ribbon>
          <Workspace>DESIGN <Caret size={7} /></Workspace>
          <RibbonBody>
            <RibbonTabs>
              {ribbonTabs.map((t, i) => <RibbonTab key={t} $on={i === 0}>{t}</RibbonTab>)}
            </RibbonTabs>
            <Groups>
              {groups.map((g) => (
                <Group key={g.name} $w={g.w}>
                  <Tools>
                    {g.tools.map((t) => (
                      <Tool key={t} $on={t === "select"} aria-label={t}>
                        <svg width="40" height="40" viewBox="0 0 120 120" overflow="visible" aria-hidden="true">{icons[t]}</svg>
                      </Tool>
                    ))}
                  </Tools>
                  <GroupMenu>{g.name}<Caret size={7} /></GroupMenu>
                </Group>
              ))}
            </Groups>
          </RibbonBody>
        </Ribbon>

        <Viewport>
          <ArmModel />
          <Cube />
          <NavBar>
            <NavTools>
              <NavButton $gap={6} aria-label="Orbit">
                <NavIcon><path d="M6 6C4 7 1 9 1 10q1 3 9 4 8-1 9-4 0-1-5-4" /><path d="M6 12Q5 3 10 1q4 1 4 9-1 8-4 9-3-1-4-5" /><path d="M10 8v4M8 10h4M12 4l3 2-3 2" stroke="#333" /></NavIcon><Caret />
              </NavButton>
              <NavButton aria-label="Look at">
                <NavIcon><path d="M2 7h16v11H2z" fill="#ddd" /><path d="M5 10h10v5H5z" fill="#999" /><path d="M3 6l3-3h8l-2 3" /><path d="M7 2h7" /></NavIcon>
              </NavButton>
              <NavButton $gap={4} aria-label="Pan">
                <svg width="24" height="20" viewBox="0 0 24 20" fill="#fff" stroke="#444" aria-hidden="true"><path d="M9 19Q7 16 2 11q0-2 3-1l3 2L6 4q1-2 3 0l1 5V2q1-2 3 0v7l1-7q2-1 2 1l0 7 2-5q2-1 2 1-1 4-2 8l-2 5z" /></svg>
              </NavButton>
              <NavButton aria-label="Zoom">
                <NavIcon><circle cx="8" cy="8" r="7" fill="#fafafa" /><path d="M13 13l6 6" stroke="#333" strokeWidth="3" /><path d="M15 4h5M17.500 2v5M15 9h5" stroke="#333" /></NavIcon>
              </NavButton>
              <NavButton $gap={6} aria-label="Fit">
                <NavIcon><path d="M1 1h18v18H1z" strokeDasharray="3 2" stroke="#aaa" /><circle cx="9" cy="8" r="7" fill="#fafafa" /><path d="M13 13l6 6" stroke="#333" strokeWidth="3" /></NavIcon><Caret />
              </NavButton>
              <NavButton aria-label="Display settings">
                <NavIcon><path d="M1 1h18v14H1z" fill="#ccc" /><path d="M3 3h14v10H3z" fill="#86aede" stroke="#5f84b0" /><path d="M10 15v3M5 19h10" strokeWidth="2" stroke="#888" /></NavIcon><Caret />
              </NavButton>
              <NavButton aria-label="Grid and snaps">
                <NavIcon><path d="M1 1h18v18H1z" fill="#e4e4e4" /><path d="M1 5h18M1 9h18M1 13h18M5 1v18M9 1v18M13 1v18M1 17h18M17 1v18" stroke="#999" /></NavIcon><Caret />
              </NavButton>
              <NavButton aria-label="Viewports">
                <NavIcon><path d="M1 2h18v16H1z" fill="#86b6e4" stroke="#46729e" /><path d="M10 2v16M1 10h18" stroke="#2f5f90" /></NavIcon><Caret />
              </NavButton>
            </NavTools>
          </NavBar>
        </Viewport>
        <StatusBar><ScrollThumb /></StatusBar>
      </Frame>
    </>
  );
}
